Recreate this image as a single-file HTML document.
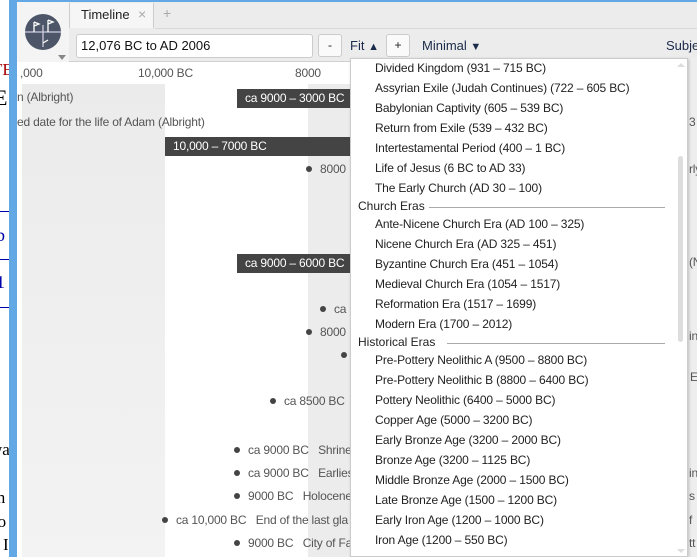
<!DOCTYPE html>
<html><head><meta charset="utf-8"><style>
*{margin:0;padding:0;box-sizing:border-box}
body{width:697px;height:557px;overflow:hidden;position:relative;background:#fff;font-family:"Liberation Sans",sans-serif}
.a{position:absolute;white-space:nowrap}
.s{font-family:"Liberation Serif",serif;font-size:20px}
.t{font-size:12px;color:#555;letter-spacing:-0.2px}
.dot{position:absolute;width:6px;height:6px;border-radius:3px;background:#444}
.bar{position:absolute;background:#444;color:#fff;font-size:12px;height:19px;line-height:19px;padding-left:8px;white-space:nowrap;letter-spacing:-0.2px}
.it{position:absolute;left:24px;font-size:12px;color:#222;white-space:nowrap;letter-spacing:-0.15px}
.hd{position:absolute;left:7px;font-size:12px;color:#222;white-space:nowrap}
.ln{position:absolute;height:1px;background:#aaa;right:22px}
.btn{position:absolute;top:34px;height:23px;border:1px solid #ccc;border-radius:3px;background:#fafafa;font-size:12px;text-align:center;line-height:21px;color:#222}
</style></head><body>
<div class="a s" style="left:-8px;top:60px;color:#a00;font-size:17px">TE</div>
<div class="a s" style="left:-6px;top:85px;font-size:22px">E</div>
<div class="a s" style="left:-4px;top:225px;color:#00a;font-size:18px">b</div>
<div class="a s" style="left:-4px;top:272px;color:#00a;font-size:18px">1</div>
<div class="a s" style="left:-10px;top:440px;font-size:17px">wa</div>
<div class="a s" style="left:-8px;top:488px;font-size:17px">th</div>
<div class="a s" style="left:-8px;top:512px;font-size:17px">ro</div>
<div class="a s" style="left:3px;top:535px;font-size:17px">I</div>
<div class="a" style="left:0;top:211px;width:9px;height:1px;background:#00a"></div>
<div class="a" style="left:0;top:259px;width:9px;height:1px;background:#00a"></div>
<div class="a" style="left:0;top:307px;width:9px;height:1px;background:#00a"></div>
<div class="a" style="left:9px;top:0;width:8px;height:557px;background:#62a8e5"></div>
<div class="a" style="left:17px;top:0;width:680px;height:2px;background:#62a8e5"></div>
<div class="a" style="left:17px;top:2px;width:680px;height:60px;background:#ececec;border-bottom:1px solid #d0d0d0"></div>
<div class="a" style="left:17px;top:2px;width:52px;height:60px;background:#f4f4f4"></div>
<div class="a" style="left:69px;top:3px;width:85px;height:25px;background:#f6f6f6;border-left:1px solid #ccc;border-right:1px solid #ccc"></div>
<div class="a" style="left:81px;top:7px;font-size:13px;color:#222">Timeline</div>
<div class="a" style="left:138px;top:6px;font-size:14px;color:#aaa">×</div>
<div class="a" style="left:163px;top:5px;font-size:14px;color:#aaa">+</div>
<div class="a" style="left:155px;top:28px;width:542px;height:1px;background:#d8d8d8"></div>
<svg class="a" style="left:24px;top:13px" width="38" height="38" viewBox="0 0 38 38">
<circle cx="19" cy="19" r="18" fill="#4d5669"/>
<path d="M1 19H37" stroke="#ccd" stroke-width="1.3"/>
<path d="M19 12V34" stroke="#ccd" stroke-width="1.3"/>
<path d="M10 19V9M10 9l5 2-5 2" stroke="#fff" stroke-width="1.3" fill="none"/>
<path d="M24 19V7M24 7l5 2-5 2" stroke="#fff" stroke-width="1.3" fill="none"/>
<path d="M19 30l5-3" stroke="#fff" stroke-width="1.3"/>
</svg>
<div class="a" style="left:58px;top:55px;width:0;height:0;border-left:4px solid transparent;border-right:4px solid transparent;border-top:5px solid #888"></div>
<div class="a" style="left:76px;top:34px;width:237px;height:24px;background:#fff;border:1px solid #ccc;border-radius:3px;font-size:13px;line-height:22px;padding-left:4px;color:#111">12,076 BC to AD 2006</div>
<div class="btn" style="left:318px;width:24px">-</div>
<div class="a" style="left:350px;top:38px;font-size:13px;color:#1a2a4a">Fit <span style="font-size:11px">▲</span></div>
<div class="btn" style="left:386px;width:24px">+</div>
<div class="a" style="left:422px;top:38px;font-size:13px;color:#1a2a4a">Minimal <span style="font-size:11px">▼</span></div>
<div class="a" style="left:666px;top:38px;font-size:13px;color:#1a2a4a">Subje</div>
<div class="a" style="left:22px;top:84px;width:143px;height:473px;background:linear-gradient(#ebebeb,#f3f3f3)"></div>
<div class="a" style="left:308px;top:84px;width:42px;height:473px;background:#ececec"></div>
<div class="a t" style="left:20px;top:66px">,000</div>
<div class="a t" style="left:138px;top:66px">10,000 BC</div>
<div class="a t" style="left:295px;top:66px">8000</div>
<div class="a t" style="left:17px;top:90px">n (Albright)</div>
<div class="a t" style="left:17px;top:115px">ed date for the life of Adam (Albright)</div>
<div class="bar" style="left:237px;top:89px;width:113px">ca 9000 – 3000 BC</div>
<div class="bar" style="left:165px;top:137px;width:185px">10,000 – 7000 BC</div>
<div class="bar" style="left:237px;top:254px;width:113px">ca 9000 – 6000 BC</div>
<div class="dot" style="left:306px;top:166px"></div><div class="a t" style="left:320px;top:162px">8000</div>
<div class="dot" style="left:320px;top:306px"></div><div class="a t" style="left:334px;top:302px">ca</div>
<div class="dot" style="left:306px;top:329px"></div><div class="a t" style="left:320px;top:325px">8000</div>
<div class="dot" style="left:341px;top:352px"></div>
<div class="dot" style="left:270px;top:398px"></div><div class="a t" style="left:284px;top:394px">ca 8500 BC</div>
<div class="dot" style="left:234px;top:447px"></div><div class="a t" style="left:248px;top:443px">ca 9000 BC&nbsp;&nbsp; Shrine</div>
<div class="dot" style="left:234px;top:470px"></div><div class="a t" style="left:248px;top:466px">ca 9000 BC&nbsp;&nbsp; Earlies</div>
<div class="dot" style="left:234px;top:493px"></div><div class="a t" style="left:248px;top:489px">9000 BC&nbsp;&nbsp; Holocene</div>
<div class="dot" style="left:162px;top:517px"></div><div class="a t" style="left:176px;top:513px">ca 10,000 BC&nbsp;&nbsp; End of the last gla</div>
<div class="dot" style="left:234px;top:540px"></div><div class="a t" style="left:248px;top:536px">9000 BC&nbsp;&nbsp; City of Fa</div>
<div class="a" style="left:688px;top:58px;width:9px;height:499px;background:#eee"></div>
<div class="a t" style="left:689px;top:115px">3</div>
<div class="a t" style="left:689px;top:162px">rly</div>
<div class="a t" style="left:689px;top:255px">(N</div>
<div class="a t" style="left:689px;top:329px">in</div>
<div class="a t" style="left:690px;top:370px">E</div>
<div class="a t" style="left:689px;top:466px">in</div>
<div class="a t" style="left:689px;top:489px">s</div>
<div class="a t" style="left:689px;top:513px">f</div>
<div class="a t" style="left:689px;top:536px">tt</div>
<div class="a" style="left:350px;top:58px;width:338px;height:499px;background:#fff;border:1px solid #ccc;box-shadow:1px 1px 3px rgba(0,0,0,.2);overflow:hidden">
<div class="it" style="top:2px">Divided Kingdom (931 – 715 BC)</div>
<div class="it" style="top:22px">Assyrian Exile (Judah Continues) (722 – 605 BC)</div>
<div class="it" style="top:42px">Babylonian Captivity (605 – 539 BC)</div>
<div class="it" style="top:62px">Return from Exile (539 – 432 BC)</div>
<div class="it" style="top:82px">Intertestamental Period (400 – 1 BC)</div>
<div class="it" style="top:102px">Life of Jesus (6 BC to AD 33)</div>
<div class="it" style="top:122px">The Early Church (AD 30 – 100)</div>
<div class="hd" style="top:140px">Church Eras</div><div class="ln" style="left:78px;top:148px"></div>
<div class="it" style="top:158px">Ante-Nicene Church Era (AD 100 – 325)</div>
<div class="it" style="top:178px">Nicene Church Era (AD 325 – 451)</div>
<div class="it" style="top:198px">Byzantine Church Era (451 – 1054)</div>
<div class="it" style="top:218px">Medieval Church Era (1054 – 1517)</div>
<div class="it" style="top:238px">Reformation Era (1517 – 1699)</div>
<div class="it" style="top:258px">Modern Era (1700 – 2012)</div>
<div class="hd" style="top:276px">Historical Eras</div><div class="ln" style="left:96px;top:284px"></div>
<div class="it" style="top:294px">Pre-Pottery Neolithic A (9500 – 8800 BC)</div>
<div class="it" style="top:314px">Pre-Pottery Neolithic B (8800 – 6400 BC)</div>
<div class="it" style="top:334px">Pottery Neolithic (6400 – 5000 BC)</div>
<div class="it" style="top:354px">Copper Age (5000 – 3200 BC)</div>
<div class="it" style="top:374px">Early Bronze Age (3200 – 2000 BC)</div>
<div class="it" style="top:394px">Bronze Age (3200 – 1125 BC)</div>
<div class="it" style="top:414px">Middle Bronze Age (2000 – 1500 BC)</div>
<div class="it" style="top:434px">Late Bronze Age (1500 – 1200 BC)</div>
<div class="it" style="top:454px">Early Iron Age (1200 – 1000 BC)</div>
<div class="it" style="top:474px">Iron Age (1200 – 550 BC)</div>
<div class="a" style="left:327px;top:97px;width:5px;height:186px;background:#ddd;border-radius:3px"></div>
<div class="a" style="left:326px;top:4px;width:0;height:0;border-left:4px solid transparent;border-right:4px solid transparent;border-bottom:4px solid #ddd"></div>
<div class="a" style="left:326px;top:490px;width:0;height:0;border-left:4px solid transparent;border-right:4px solid transparent;border-top:4px solid #ddd"></div>
</div>
</body></html>
